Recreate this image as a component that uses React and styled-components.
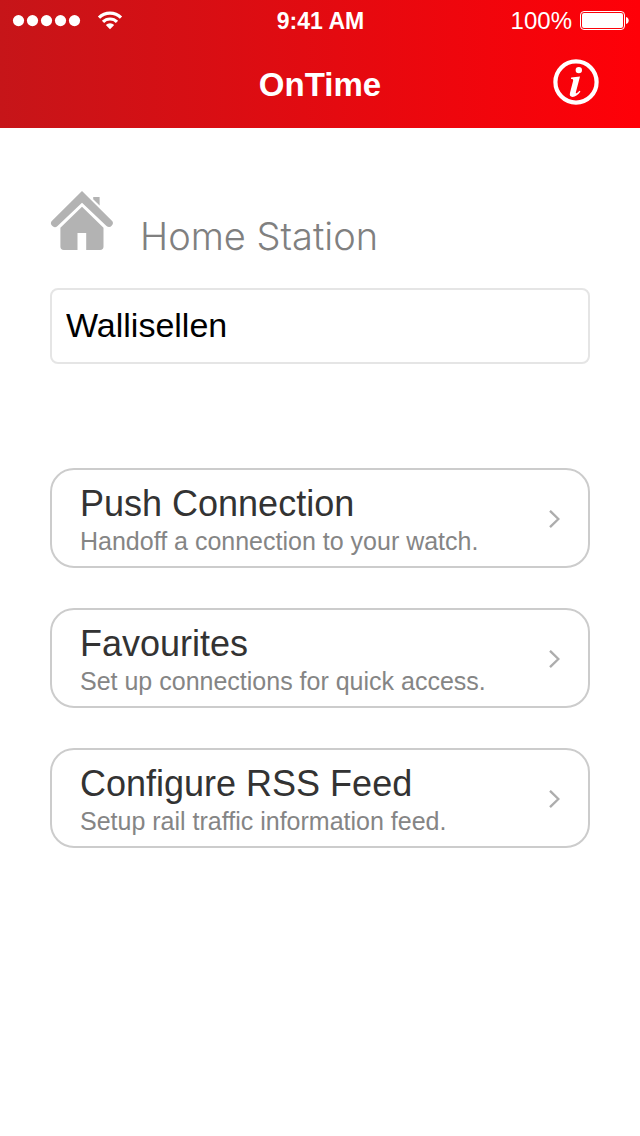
import React from "react";
import styled, { createGlobalStyle } from "styled-components";

const GlobalStyle = createGlobalStyle`
  *, *::before, *::after { box-sizing: border-box; }
  body {
    margin: 0;
    background: #fff;
    color: #333;
    font-family: "Liberation Sans", Helvetica, Arial, sans-serif;
  }
  button, input { font: inherit; color: inherit; }
`;

const Header = styled.header`
  background: linear-gradient(90deg, #c61519, #ff0008);
  color: #fff;
`;

const StatusBar = styled.div`
  display: grid;
  grid-template-columns: 1fr auto 1fr;
  align-items: center;
  height: 40px;
  padding: 2px 11px 0 12px;
  font-size: 24px;
  line-height: 38px;
`;

const StatusGroup = styled.div`
  display: flex;
  align-items: center;
  justify-content: ${(p) => (p.$end ? "flex-end" : "flex-start")};
  gap: ${(p) => (p.$end ? 8 : 15)}px;
`;

const Clock = styled.time`
  font-size: 23px;
  font-weight: 700;
`;

const NavBar = styled.div`
  display: grid;
  grid-template-columns: 1fr auto 1fr;
  align-items: center;
  height: 88px;
  padding: 0 40px 4px;
`;

const Title = styled.h1`
  grid-column: 2;
  margin: 0;
  padding-top: 6px;
  font-size: 33px;
  font-weight: 700;
  line-height: 40px;
`;

const IconButton = styled.button`
  display: flex;
  justify-self: end;
  padding: 0;
  border: 0;
  background: none;
  cursor: pointer;
`;

const Main = styled.main`
  padding: 62px 50px 40px;
`;

const StationLabel = styled.label`
  display: flex;
  align-items: baseline;
  gap: 26px;
  color: #808080;
  font-family: Inter, "Liberation Sans", sans-serif;
  font-size: 38px;
  font-weight: 300;
  line-height: 48px;
`;

const StationInput = styled.input`
  display: block;
  width: 100%;
  height: 76px;
  margin-top: 28px;
  padding: 0 14px 2px;
  border: 2px solid #e5e5e5;
  border-radius: 8px;
  background: #fff;
  color: #000;
  font-size: 34px;
`;

const Menu = styled.nav`
  display: flex;
  flex-direction: column;
  gap: 40px;
  margin-top: 104px;
`;

const MenuButton = styled.button`
  display: flex;
  align-items: center;
  justify-content: space-between;
  width: 100%;
  padding: 13px 28px 9px;
  border: 2px solid #ccc;
  border-radius: 24px;
  background: #fff;
  text-align: left;
  cursor: pointer;
`;

const MenuTitle = styled.span`
  display: block;
  font-size: 36px;
  line-height: 42px;
`;

const MenuNote = styled.span`
  display: block;
  color: #858585;
  font-size: 25px;
  line-height: 32px;
`;

const SignalDots = () => (
  <svg width="70" height="12" viewBox="0 0 70 12" fill="currentColor" role="img" aria-label="Signal">
    {[7, 21, 35, 49, 63].map((x) => (
      <circle key={x} cx={x - 0.5} cy="5.6" r="5.6" />
    ))}
  </svg>
);

const Wifi = () => (
  <svg width="26" height="20" viewBox="0 0 26 20" role="img" aria-label="Wi-Fi">
    <g fill="none" stroke="currentColor" strokeWidth="3.2">
      <path d="M2 6.6a15.6 15.6 0 0 1 22 0" />
      <path d="M6 10.9a9.9 9.9 0 0 1 14 0" />
    </g>
    <path fill="currentColor" d="M13 18.2l-4.2-4.2a6 6 0 0 1 8.4 0z" />
  </svg>
);

const Battery = () => (
  <svg width="49" height="20" viewBox="0 0 49 20" role="img" aria-label="Battery full">
    <rect x="0.5" y="0.5" width="44" height="18" rx="3.5" fill="none" stroke="currentColor" />
    <rect x="2" y="2" width="41" height="15" rx="2" fill="currentColor" />
    <path d="M46 6c3.6 0.6 3.6 6.4 0 7z" fill="currentColor" />
  </svg>
);

const InfoIcon = () => (
  <svg width="48" height="48" viewBox="0 0 48 48" fill="none" stroke="currentColor" aria-hidden="true">
    <circle cx="24" cy="24" r="20.6" strokeWidth="4.2" />
    <circle cx="26.8" cy="12.1" r="3.2" fill="currentColor" stroke="none" />
    <path
      fill="currentColor"
      stroke="none"
      d="M19.2 19.6L28 18.6L24 33.8C23.4 36 24.3 36.1 27.4 32.7L28.5 33.5C25.7 37.3 23.3 38.9 20.6 38.9C18 38.9 17.4 37.2 18 34.8L21 23.3C21.5 21.4 21 20.9 19 20.9Z"
    />
  </svg>
);

const HomeIcon = () => (
  <svg width="64" height="60" viewBox="0 0 64 60" aria-hidden="true">
    <g fill="#b3b3b3">
      <path d="M32 1L61.4 30.2A3.7 3.7 0 0 1 56.5 36L32 12.8L7.5 36A3.7 3.7 0 0 1 2.3 30.4Z" />
      <path d="M43.2 7H49.6V15.4L43.2 9.2Z" />
      <path d="M32 16.8L53.5 37.8V56.5a3.4 3.4 0 0 1-3.4 3.4H36.2V43H27.5V59.9H13.8a3.4 3.4 0 0 1-3.4-3.4V37.8Z" />
    </g>
  </svg>
);

const Chevron = () => (
  <svg width="12" height="20" viewBox="0 0 12 20" fill="none" aria-hidden="true">
    <path d="M2 0.8L10.4 9L2 17.2" stroke="#adadad" strokeWidth="2.4" />
  </svg>
);

const ACTIONS = [
  { title: "Push Connection", note: "Handoff a connection to your watch." },
  { title: "Favourites", note: "Set up connections for quick access." },
  { title: "Configure RSS Feed", note: "Setup rail traffic information feed." },
];

export default function App() {
  return (
    <>
      <GlobalStyle />
      <Header>
        <StatusBar>
          <StatusGroup>
            <SignalDots />
            <Wifi />
          </StatusGroup>
          <Clock>9:41 AM</Clock>
          <StatusGroup $end>
            <span>100%</span>
            <Battery />
          </StatusGroup>
        </StatusBar>
        <NavBar>
          <Title>OnTime</Title>
          <IconButton type="button" aria-label="Information">
            <InfoIcon />
          </IconButton>
        </NavBar>
      </Header>
      <Main>
        <StationLabel htmlFor="home-station">
          <HomeIcon />
          Home Station
        </StationLabel>
        <StationInput id="home-station" type="text" defaultValue="Wallisellen" />
        <Menu>
          {ACTIONS.map(({ title, note }) => (
            <MenuButton key={title} type="button">
              <span>
                <MenuTitle>{title}</MenuTitle>
                <MenuNote>{note}</MenuNote>
              </span>
              <Chevron />
            </MenuButton>
          ))}
        </Menu>
      </Main>
    </>
  );
}
